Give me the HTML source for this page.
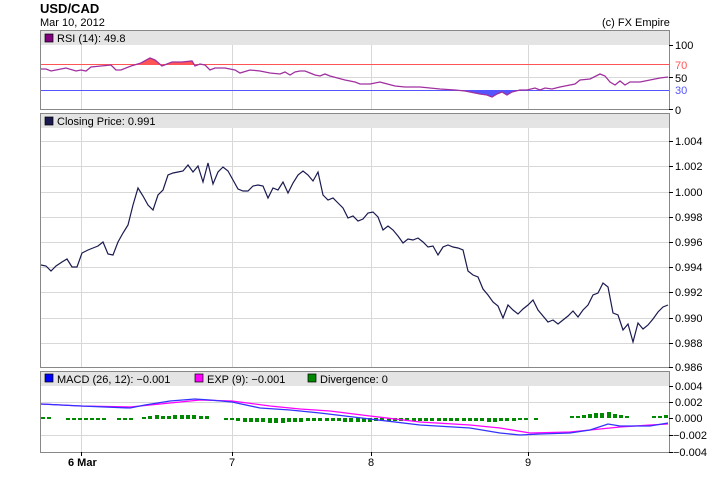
<!DOCTYPE html>
<html><head><meta charset="utf-8"><style>
body{margin:0;background:#fff;width:710px;height:487px;overflow:hidden}
svg text{font-family:"Liberation Sans",sans-serif;font-size:11px;fill:#000}
</style></head><body>
<svg width="710" height="487" xmlns="http://www.w3.org/2000/svg">
<text x="40" y="13" style="font-size:13px;font-weight:bold">USD/CAD</text>
<text x="40" y="26">Mar 10, 2012</text>
<text x="602" y="26">(c) FX Empire</text>

<rect x="40.5" y="30.5" width="629" height="79" fill="#fff" stroke="#888"/>
<rect x="41" y="31" width="628" height="14" fill="#e4e4e4"/>
<rect x="45" y="34" width="8" height="8" fill="#800080" stroke="#000" stroke-width="0.7"/>
<text x="57" y="42">RSI (14): 49.8</text>
<g stroke="#d8d8d8"><line x1="81.5" y1="45" x2="81.5" y2="109"/><line x1="232.5" y1="45" x2="232.5" y2="109"/><line x1="371.5" y1="45" x2="371.5" y2="109"/><line x1="528.5" y1="45" x2="528.5" y2="109"/><line x1="41" y1="77.5" x2="669" y2="77.5"/></g>
<defs>
<clipPath id="ca"><rect x="40" y="40" width="630" height="24.5"/></clipPath>
<clipPath id="cb"><rect x="40" y="90.5" width="630" height="20"/></clipPath>
</defs>
<g id="rsi">
<polygon clip-path="url(#ca)" fill="#f55" points="41,64.5 41,69 46,69 51,71 56,70 66,68 76,71 81,70 86,71 91,67 101,66 111,65 116,70 121,70 131,66 141,63 150,58 155,60 162,66 167,64 172,62 182,62 192,61 195,66 200,64 205,65 210,70 668,70 668,64.5"/>
<polygon clip-path="url(#cb)" fill="#55f" points="440,90.5 455,90 465,91 470,92 475,93 480,94 487,95 492,97 497,94 502,92 507,95 512,92 520,90 527,90 535,88 535,90.5"/>
</g>
<line x1="41" y1="64.5" x2="669" y2="64.5" stroke="#f55"/>
<line x1="41" y1="90.5" x2="669" y2="90.5" stroke="#55f"/>
<polyline fill="none" stroke="#a030a0" stroke-width="1.3" points="41,69 46,69 51,71 56,70 66,68 76,71 81,70 86,71 91,67 101,66 111,65 116,70 121,70 131,66 141,63 150,58 155,60 162,66 167,64 172,62 182,62 192,61 195,66 200,64 205,65 210,70 215,68 225,68 235,70 240,73 250,70 260,71 270,73 280,74 285,72 290,75 295,72 300,71 305,71 310,73 315,75 320,76 325,74 330,76 345,80 355,82 360,84 370,84 380,82 395,86 405,87 420,87 430,88 440,89 455,90 465,91 470,92 475,93 480,94 487,95 492,97 497,94 502,92 507,95 512,92 520,90 527,90 535,88 540,90 545,88 552,89 560,87 565,86 575,84 580,80 590,79 600,74 605,76 610,82 615,85 620,81 625,85 630,82 640,82 650,80 660,78 668,77"/>
<g stroke="#000"><line x1="669" y1="45.5" x2="673" y2="45.5"/><line x1="669" y1="77.5" x2="673" y2="77.5"/><line x1="669" y1="109.5" x2="673" y2="109.5"/></g>
<text x="675" y="49">100</text><text x="675" y="69" style="fill:#f55">70</text><text x="675" y="82">50</text><text x="675" y="94" style="fill:#55f">30</text><text x="675" y="114">0</text>

<rect x="40.5" y="113.5" width="629" height="254" fill="#fff" stroke="#888"/>
<rect x="41" y="114" width="628" height="14" fill="#e4e4e4"/>
<rect x="45" y="117" width="8" height="8" fill="#1a1a50" stroke="#000" stroke-width="0.7"/>
<text x="57" y="125">Closing Price: 0.991</text>
<g stroke="#d8d8d8">
<line x1="81.5" y1="128" x2="81.5" y2="367"/><line x1="232.5" y1="128" x2="232.5" y2="367"/><line x1="371.5" y1="128" x2="371.5" y2="367"/><line x1="528.5" y1="128" x2="528.5" y2="367"/>
<line x1="41" y1="141.5" x2="669" y2="141.5"/><line x1="41" y1="166.5" x2="669" y2="166.5"/><line x1="41" y1="192.5" x2="669" y2="192.5"/><line x1="41" y1="217.5" x2="669" y2="217.5"/><line x1="41" y1="242.5" x2="669" y2="242.5"/><line x1="41" y1="267.5" x2="669" y2="267.5"/><line x1="41" y1="292.5" x2="669" y2="292.5"/><line x1="41" y1="318.5" x2="669" y2="318.5"/><line x1="41" y1="343.5" x2="669" y2="343.5"/>
</g>
<polyline fill="none" stroke="#1a1a50" stroke-width="1.2" points="41,265 46,266 51,271 56,266 62,262 67,259 72,267 77,267 82,253 88,250 93,248 98,246 103,242 108,254 113,255 118,242 123,233 128,225 133,205 138,188 143,196 148,205 153,210 158,195 163,190 168,175 173,173 178,172 183,171 188,165 193,172 198,166 203,182 208,163 213,184 218,172 223,167 228,171 233,180 238,189 243,191 248,191 253,186 258,185 263,186 268,198 273,188 278,190 283,182 288,193 293,183 298,175 303,171 308,175 313,181 318,172 323,195 328,200 333,198 338,203 343,208 348,218 353,216 358,221 363,219 368,213 373,212 378,217 383,230 388,226 393,230 398,236 403,243 408,239 413,240 418,238 423,242 428,247 433,246 438,255 443,247 448,245 453,247 458,248 463,250 468,271 473,275 478,277 483,289 488,295 493,302 498,306 503,318 508,305 513,310 518,314 523,309 528,305 533,300 538,310 543,316 548,322 553,320 558,324 563,320 568,316 573,311 578,317 583,310 588,305 593,295 598,293 603,283 608,287 613,313 618,315 623,330 628,324 633,342 638,323 643,329 648,325 653,319 658,312 663,307 668,305"/>
<g stroke="#000"><line x1="669" y1="141.5" x2="673" y2="141.5"/><line x1="669" y1="166.5" x2="673" y2="166.5"/><line x1="669" y1="192.5" x2="673" y2="192.5"/><line x1="669" y1="217.5" x2="673" y2="217.5"/><line x1="669" y1="242.5" x2="673" y2="242.5"/><line x1="669" y1="267.5" x2="673" y2="267.5"/><line x1="669" y1="292.5" x2="673" y2="292.5"/><line x1="669" y1="318.5" x2="673" y2="318.5"/><line x1="669" y1="343.5" x2="673" y2="343.5"/><line x1="669" y1="367.5" x2="673" y2="367.5"/></g>
<text x="675" y="145">1.004</text><text x="675" y="170">1.002</text><text x="675" y="196">1.000</text><text x="675" y="221">0.998</text><text x="675" y="246">0.996</text><text x="675" y="271">0.994</text><text x="675" y="296">0.992</text><text x="675" y="322">0.990</text><text x="675" y="347">0.988</text><text x="675" y="371">0.986</text>

<rect x="40.5" y="371.5" width="629" height="81" fill="#fff" stroke="#888"/>
<rect x="41" y="372" width="628" height="14" fill="#e4e4e4"/>
<rect x="45" y="374" width="8" height="8" fill="#00f" stroke="#000" stroke-width="0.7"/>
<text x="57" y="383">MACD (26, 12): −0.001</text>
<rect x="195" y="374" width="8" height="8" fill="#f0f" stroke="#000" stroke-width="0.7"/>
<text x="207" y="383">EXP (9): −0.001</text>
<rect x="308" y="374" width="8" height="8" fill="#080" stroke="#000" stroke-width="0.7"/>
<text x="320" y="383">Divergence: 0</text>
<g stroke="#d8d8d8">
<line x1="81.5" y1="386" x2="81.5" y2="452"/><line x1="232.5" y1="386" x2="232.5" y2="452"/><line x1="371.5" y1="386" x2="371.5" y2="452"/><line x1="528.5" y1="386" x2="528.5" y2="452"/>
<line x1="41" y1="402.5" x2="669" y2="402.5"/><line x1="41" y1="435.5" x2="669" y2="435.5"/>
</g>
<g fill="#080">
<rect x="41" y="417" width="4" height="2"/><rect x="47" y="417" width="4" height="2"/>
<rect x="66" y="418" width="4" height="2"/><rect x="72" y="418" width="4" height="2"/><rect x="78" y="418" width="4" height="2"/><rect x="84" y="418" width="4" height="2"/><rect x="90" y="418" width="4" height="2"/><rect x="96" y="418" width="4" height="2"/><rect x="102" y="418" width="4" height="2"/>
<rect x="117" y="418" width="4" height="2"/><rect x="123" y="418" width="4" height="2"/><rect x="129" y="418" width="4" height="2"/>
<rect x="142" y="417" width="4" height="2"/><rect x="148" y="416" width="4" height="3"/><rect x="155" y="415" width="4" height="4"/><rect x="161" y="416" width="4" height="3"/><rect x="167" y="416" width="4" height="3"/><rect x="173" y="415" width="4" height="4"/><rect x="180" y="415" width="4" height="4"/><rect x="186" y="415" width="4" height="4"/><rect x="192" y="415" width="4" height="4"/><rect x="199" y="416" width="4" height="3"/><rect x="205" y="416" width="4" height="3"/>
<rect x="224" y="418" width="4" height="2"/><rect x="230" y="418" width="4" height="2"/><rect x="236" y="418" width="4" height="3"/><rect x="243" y="418" width="4" height="4"/><rect x="249" y="418" width="4" height="4"/><rect x="255" y="418" width="4" height="4"/><rect x="261" y="418" width="4" height="4"/><rect x="268" y="418" width="4" height="5"/><rect x="274" y="418" width="4" height="5"/><rect x="281" y="418" width="4" height="5"/><rect x="287" y="418" width="4" height="4"/><rect x="293" y="418" width="4" height="4"/><rect x="299" y="418" width="4" height="4"/><rect x="306" y="418" width="4" height="3"/><rect x="312" y="418" width="4" height="3"/><rect x="318" y="418" width="4" height="3"/>
<rect x="325" y="418" width="4" height="3"/><rect x="331" y="418" width="4" height="3"/><rect x="337" y="418" width="4" height="3"/><rect x="343" y="418" width="4" height="4"/><rect x="349" y="418" width="4" height="4"/><rect x="356" y="418" width="4" height="4"/><rect x="362" y="418" width="4" height="4"/><rect x="368" y="418" width="4" height="4"/><rect x="374" y="418" width="4" height="3"/><rect x="380" y="418" width="4" height="3"/><rect x="387" y="418" width="4" height="3"/><rect x="393" y="418" width="4" height="3"/><rect x="399" y="418" width="4" height="3"/><rect x="405" y="418" width="4" height="3"/><rect x="412" y="418" width="4" height="3"/><rect x="418" y="418" width="4" height="3"/><rect x="424" y="418" width="4" height="3"/><rect x="430" y="418" width="4" height="3"/><rect x="437" y="418" width="4" height="3"/><rect x="443" y="418" width="4" height="3"/><rect x="449" y="418" width="4" height="3"/><rect x="455" y="418" width="4" height="3"/><rect x="462" y="418" width="4" height="3"/><rect x="468" y="418" width="4" height="3"/><rect x="474" y="418" width="4" height="3"/><rect x="480" y="418" width="4" height="3"/><rect x="487" y="418" width="4" height="4"/><rect x="493" y="418" width="4" height="4"/><rect x="499" y="418" width="4" height="3"/><rect x="505" y="418" width="4" height="3"/><rect x="512" y="418" width="4" height="3"/><rect x="518" y="418" width="4" height="2"/><rect x="524" y="418" width="4" height="2"/><rect x="534" y="418" width="4" height="2"/>
<rect x="570" y="416" width="4" height="2"/><rect x="576" y="416" width="4" height="2"/><rect x="582" y="415" width="4" height="3"/><rect x="588" y="414" width="4" height="4"/><rect x="594" y="413" width="4" height="5"/><rect x="600" y="413" width="4" height="5"/><rect x="607" y="412" width="4" height="6"/><rect x="613" y="414" width="4" height="4"/><rect x="619" y="415" width="4" height="3"/><rect x="625" y="416" width="4" height="2"/>
<rect x="652" y="416" width="4" height="2"/><rect x="658" y="416" width="4" height="2"/><rect x="664" y="415" width="4" height="3"/>
</g>
<polyline fill="none" stroke="#f0f" stroke-width="1.3" points="41,404 81,406 130,407 160,404 200,400 232,401 270,406 300,409 330,411 370,416 420,422 470,425 500,428 530,433 570,432 600,429 620,427 650,425 668,424"/>
<polyline fill="none" stroke="#33f" stroke-width="1.3" points="41,404 81,406 130,408 145,405 170,401 195,399 210,400 232,402 260,408 290,410 320,413 370,419 420,425 470,428 500,433 520,435 540,434 570,433 590,430 608,424 620,426 650,426 668,423"/>
<g stroke="#000"><line x1="669" y1="386.5" x2="673" y2="386.5"/><line x1="669" y1="402.5" x2="673" y2="402.5"/><line x1="669" y1="418.5" x2="673" y2="418.5"/><line x1="669" y1="435.5" x2="673" y2="435.5"/><line x1="669" y1="452.5" x2="673" y2="452.5"/></g>
<text x="675" y="390">0.004</text><text x="675" y="406">0.002</text><text x="675" y="422">0.000</text><text x="673" y="439">−0.002</text><text x="673" y="456">−0.004</text>
<g stroke="#000"><line x1="81.5" y1="452" x2="81.5" y2="456"/><line x1="232.5" y1="452" x2="232.5" y2="456"/><line x1="371.5" y1="452" x2="371.5" y2="456"/><line x1="528.5" y1="452" x2="528.5" y2="456"/></g>
<text x="68" y="466" style="font-weight:bold">6 Mar</text>
<text x="229" y="466">7</text><text x="368" y="466">8</text><text x="525" y="466">9</text>
</svg>
</body></html>
